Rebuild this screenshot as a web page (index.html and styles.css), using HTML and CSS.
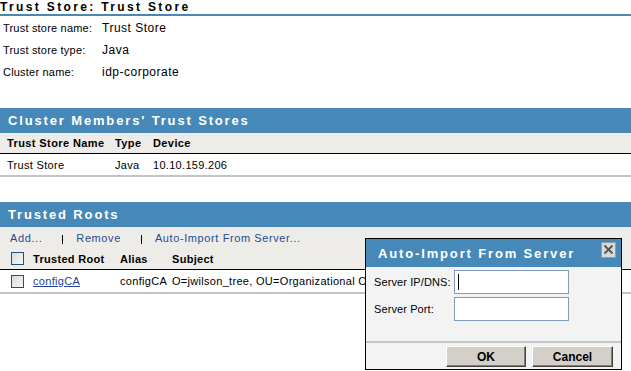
FILE: index.html
```html
<!DOCTYPE html>
<html>
<head>
<meta charset="utf-8">
<link rel="stylesheet" href="styles.css">
</head>
<body>
<div class="page">
  <h1 class="page-title">Trust Store: Trust Store</h1>
  <div class="props">
    <div class="prop"><span class="prop-label">Trust store name:</span><span class="prop-value">Trust Store</span></div>
    <div class="prop"><span class="prop-label">Trust store type:</span><span class="prop-value">Java</span></div>
    <div class="prop"><span class="prop-label">Cluster name:</span><span class="prop-value">idp-corporate</span></div>
  </div>

  <div class="section">
    <div class="section-head">Cluster Members' Trust Stores</div>
    <div class="grid members head-row">
      <span>Trust Store Name</span><span>Type</span><span>Device</span>
    </div>
    <div class="grid members data-row">
      <span>Trust Store</span><span>Java</span><span>10.10.159.206</span>
    </div>
  </div>

  <div class="section roots-section">
    <div class="section-head">Trusted Roots</div>
    <div class="roots-top">
      <div class="toolbar">
        <a class="tool-link">Add...</a><span class="sep"></span>
        <a class="tool-link">Remove</a><span class="sep"></span>
        <a class="tool-link">Auto-Import From Server...</a>
      </div>
      <div class="grid roots head-row2">
        <span class="cb"></span><span>Trusted Root</span><span>Alias</span><span>Subject</span>
      </div>
    </div>
    <div class="grid roots data-row2">
      <span class="cb"></span><a class="item-link">configCA</a><span>configCA</span><span>O=jwilson_tree, OU=Organizational CA</span>
    </div>
  </div>
</div>

<div class="dialog">
  <div class="dialog-title">
    <span>Auto-Import From Server</span>
    <span class="close-btn"><svg width="11" height="11" viewBox="0 0 11 11"><path d="M1.5 1.5 L9.5 9.5 M9.5 1.5 L1.5 9.5" stroke="#555" stroke-width="1.8" fill="none"/></svg></span>
  </div>
  <div class="dialog-body">
    <div class="field"><span class="field-label">Server IP/DNS:</span><div class="input"><span class="caret"></span></div></div>
    <div class="field"><span class="field-label">Server Port:</span><div class="input"></div></div>
  </div>
  <div class="dialog-foot">
    <span class="btn btn-ok">OK</span>
    <span class="btn btn-cancel">Cancel</span>
  </div>
</div>
</body>
</html>
```

FILE: styles.css
```css
html, body {
  margin: 0;
  padding: 0;
  background: #ffffff;
  font-family: "Liberation Sans", Arial, sans-serif;
  color: #000;
}
.page {
  width: 631px;
  height: 371px;
  overflow: hidden;
}
.page-title {
  margin: 0;
  height: 14px;
  line-height: 14px;
  font-size: 12px;
  font-weight: bold;
  letter-spacing: 2.35px;
  padding-left: 0;
  border-bottom: 2px solid #4689b9;
}
.props {
  padding-top: 1px;
}
.prop {
  display: flex;
  height: 22px;
  align-items: center;
}
.prop-label {
  width: 99px;
  padding-left: 3px;
  font-size: 11px;
  letter-spacing: 0.2px;
}
.prop-value {
  font-size: 12px;
  letter-spacing: 0.5px;
}
.section {
  margin-top: 25px;
}
.roots-section {
  margin-top: 25px;
}
.section-head {
  height: 25px;
  line-height: 25px;
  background: #4689b9;
  color: #fff;
  font-size: 13px;
  font-weight: bold;
  letter-spacing: 1.85px;
  padding-left: 8px;
}
.grid {
  display: grid;
  align-items: center;
  font-size: 11px;
}
.members {
  grid-template-columns: 108px 38px 1fr;
  padding-left: 7px;
}
.head-row {
  height: 20px;
  background: #eeece8;
  border-bottom: 1px solid #000;
  font-weight: bold;
  letter-spacing: 0.4px;
}
.data-row {
  height: 21px;
  border-bottom: 2px solid #c4c4c4;
  letter-spacing: 0.3px;
}
.roots-top {
  background: #eeece8;
  border-bottom: 1px solid #000;
}
.toolbar {
  height: 21px;
  display: flex;
  align-items: center;
  padding-left: 10px;
  font-size: 11px;
  letter-spacing: 0.6px;
}
.tool-link {
  color: #1f4d8c;
}
.sep {
  width: 1px;
  height: 9px;
  margin: 3px 13px 0 20px;
  background: #000;
}
.roots {
  grid-template-columns: 22px 87px 52px 1fr;
  padding-left: 11px;
}
.head-row2 {
  height: 21px;
  font-weight: bold;
  letter-spacing: 0.3px;
}
.data-row2 {
  height: 22px;
  border-bottom: 2px solid #c4c4c4;
  letter-spacing: 0.3px;
}
.cb {
  width: 11px;
  height: 11px;
  border: 1px solid #1c5180;
  background: linear-gradient(135deg, #dcdcd6, #f6f6f4);
}
.item-link {
  color: #1f3fa0;
  text-decoration: underline;
}
.dialog {
  position: absolute;
  left: 365px;
  top: 238px;
  width: 255px;
  height: 130px;
  border: 1px solid #000;
  background: #f3f3f3;
  display: flex;
  flex-direction: column;
}
.dialog-title {
  height: 28px;
  background: #4689b9;
  color: #fff;
  font-size: 13px;
  font-weight: bold;
  letter-spacing: 1.85px;
  display: flex;
  align-items: center;
  justify-content: space-between;
  padding-left: 12px;
  padding-right: 5px;
}
.close-btn {
  width: 13px;
  height: 14px;
  border: 1px solid #9a9a9a;
  background: #d9d9d9;
  display: flex;
  align-items: center;
  justify-content: center;
  margin-top: -7px;
}
.dialog-body {
  height: 76px;
  padding-top: 3px;
  border-bottom: 2px solid #c6c6c6;
  box-sizing: border-box;
}
.field {
  display: flex;
  align-items: center;
  height: 24px;
  margin-bottom: 3px;
  padding-left: 8px;
}
.field-label {
  width: 80px;
  font-size: 11px;
  letter-spacing: 0.1px;
}
.input {
  width: 113px;
  height: 22px;
  border: 1px solid #7f9db9;
  background: #fff;
  position: relative;
}
.caret {
  position: absolute;
  left: 3px;
  top: 3px;
  width: 1px;
  height: 16px;
  background: #000;
}
.dialog-foot {
  flex: 1;
  display: flex;
  justify-content: flex-end;
  align-items: flex-start;
  padding-top: 3px;
  padding-right: 8px;
  gap: 6px;
}
.btn {
  box-sizing: border-box;
  height: 21px;
  background: #d4d0c8;
  border-top: 1px solid #fff;
  border-left: 1px solid #fff;
  border-right: 1px solid #404040;
  border-bottom: 1px solid #404040;
  box-shadow: inset -1px -1px 0 #808080;
  font-size: 12px;
  font-weight: bold;
  display: flex;
  align-items: center;
  justify-content: center;
}
.btn-ok {
  width: 80px;
}
.btn-cancel {
  width: 81px;
}
```
